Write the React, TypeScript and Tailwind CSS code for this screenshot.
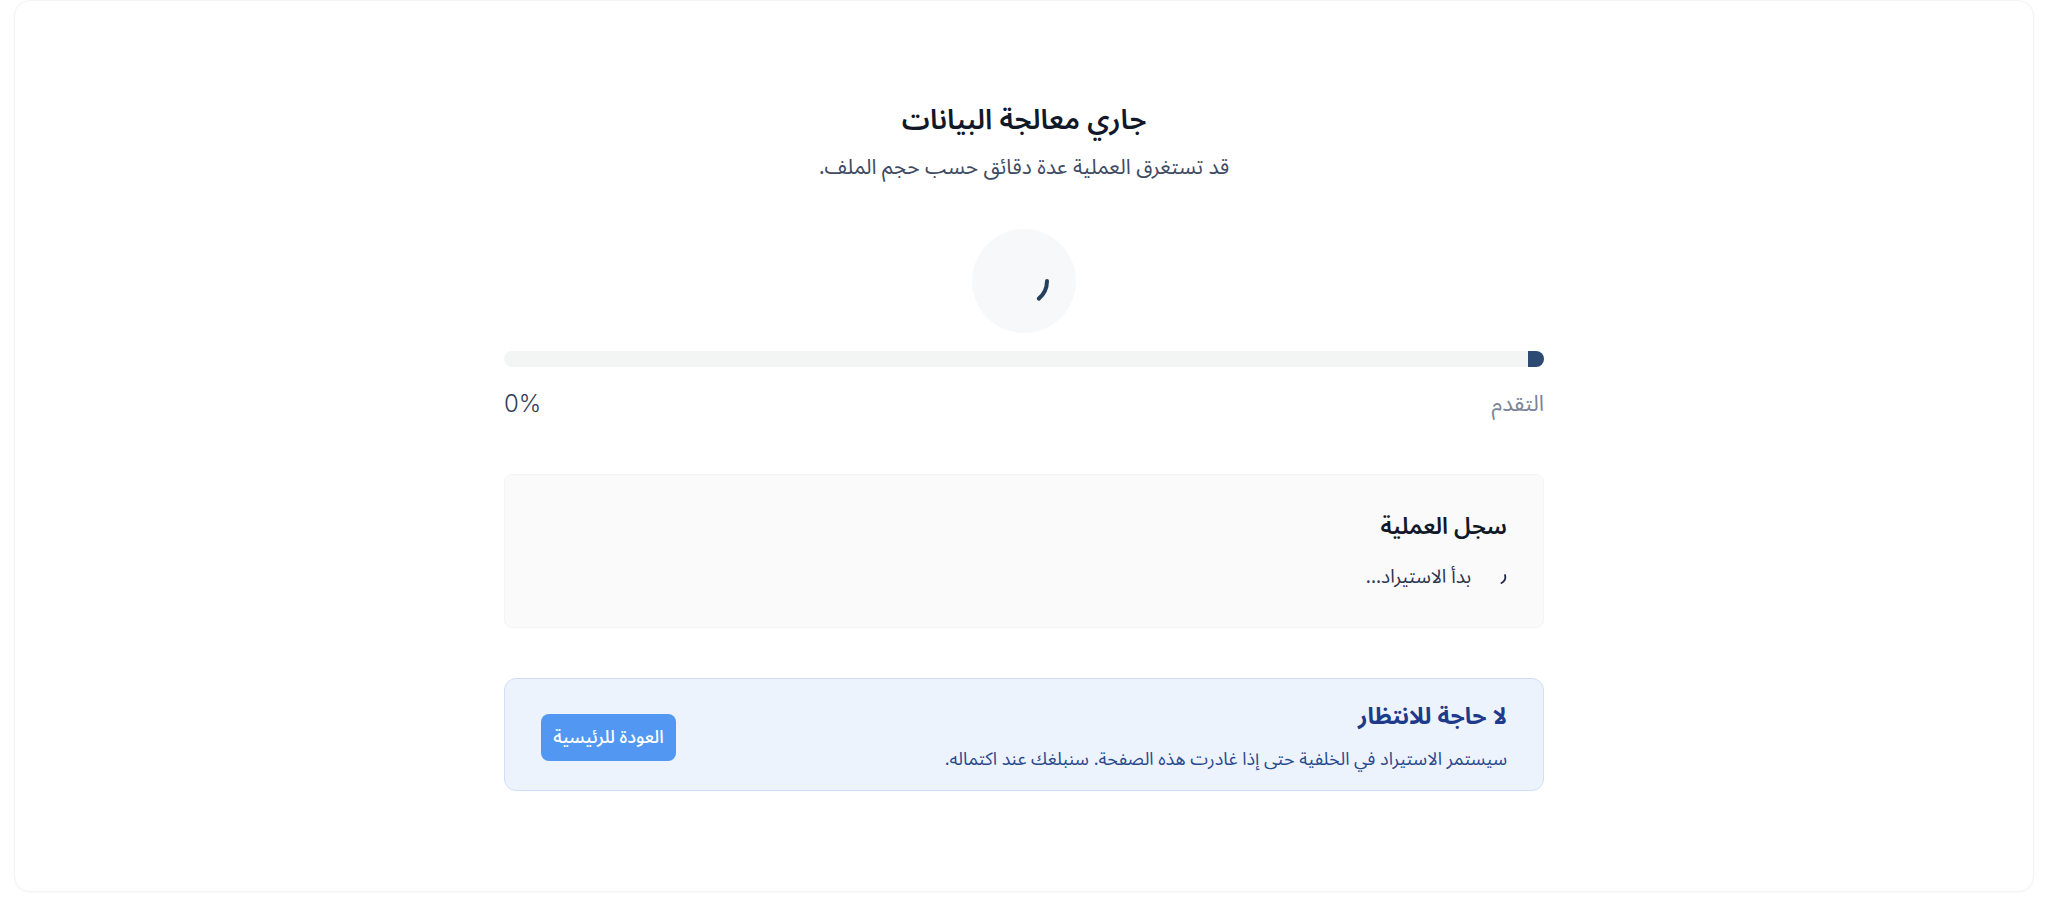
import React from "react";

const font = {
  fontFamily: '"Noto Sans Arabic", "Noto Sans", "DejaVu Sans", sans-serif',
};

// Big spinner: a short arc inside a pale circle
function Spinner() {
  return (
    <div className="flex h-[104px] w-[104px] items-center justify-center rounded-full bg-[#f7f8fa]">
      <svg width="60" height="60" viewBox="0 0 60 60" fill="none">
        <path
          d="M53 30 A23 23 0 0 1 44.8 47.6"
          stroke="#23405f"
          strokeWidth="4"
          strokeLinecap="round"
        />
      </svg>
    </div>
  );
}

function SmallSpinner() {
  return (
    <svg width="16" height="16" viewBox="0 0 16 16" fill="none">
      <path
        d="M14 6 A7 7 0 0 1 10.5 14"
        stroke="#1f2a44"
        strokeWidth="1.8"
        strokeLinecap="round"
      />
    </svg>
  );
}

export default function App() {
  const progress = 0;

  return (
    <div className="min-h-screen bg-white px-[14px] pb-[31px]" style={font}>
      <div
        className="rounded-2xl border border-[#f3f4f6] bg-white pt-[104px] pb-[100px] shadow-[0_1px_3px_rgba(0,0,0,0.03)]"
        dir="rtl"
      >
        <div className="mx-auto flex w-[1040px] flex-col items-center">
          <h1 className="text-[28px] leading-8 font-semibold text-[#111827]">جاري معالجة البيانات</h1>
          <p className="mt-4 text-[21px] leading-7 text-[#3f4b63]">
            قد تستغرق العملية عدة دقائق حسب حجم الملف.
          </p>

          <div className="mt-12">
            <Spinner />
          </div>

          {/* progress */}
          <div className="mt-[18px] w-full">
            <div className="h-4 w-full overflow-hidden rounded-full bg-[#f3f4f4]">
              <div
                className="h-full min-w-4 bg-[#2c4a72]"
                style={{ width: `${progress}%` }}
              />
            </div>
            <div className="mt-[21px] flex items-center justify-between leading-8">
              <span className="text-[22px] text-[#7a8598]">التقدم</span>
              <span
                className="text-2xl font-light text-[#2f3d55]"
                style={{ fontFamily: 'Inter, "Noto Sans", sans-serif' }}
              >
                {progress}%
              </span>
            </div>
          </div>

          {/* log */}
          <div className="mt-[54px] w-full rounded-lg border border-gray-100 bg-[#fafafa] px-9 pt-9 pb-9">
            <h3 className="text-[23px] leading-8 font-semibold text-[#111827]">سجل العملية</h3>
            <div className="mt-5 flex items-center gap-5 text-[19px] leading-7 text-[#2b3650]">
              <SmallSpinner />
              <span>بدأ الاستيراد...</span>
            </div>
          </div>

          {/* background notice */}
          <div className="mt-[50px] flex w-full items-center justify-between rounded-xl border border-[#cfdff7] bg-[#edf3fd] px-9 pt-[22px] pb-[17px]">
            <div>
              <h4 className="text-[23px] leading-8 font-bold text-[#1e3a8a]">لا حاجة للانتظار</h4>
              <p className="mt-3 text-lg leading-7 text-[#2a4a8e]">
                سيستمر الاستيراد في الخلفية حتى إذا غادرت هذه الصفحة. سنبلغك عند اكتماله.
              </p>
            </div>
            <button className="h-[47px] w-[135px] rounded-lg bg-[#5298f2] text-lg font-medium text-white">
              العودة للرئيسية
            </button>
          </div>
        </div>
      </div>
    </div>
  );
}
